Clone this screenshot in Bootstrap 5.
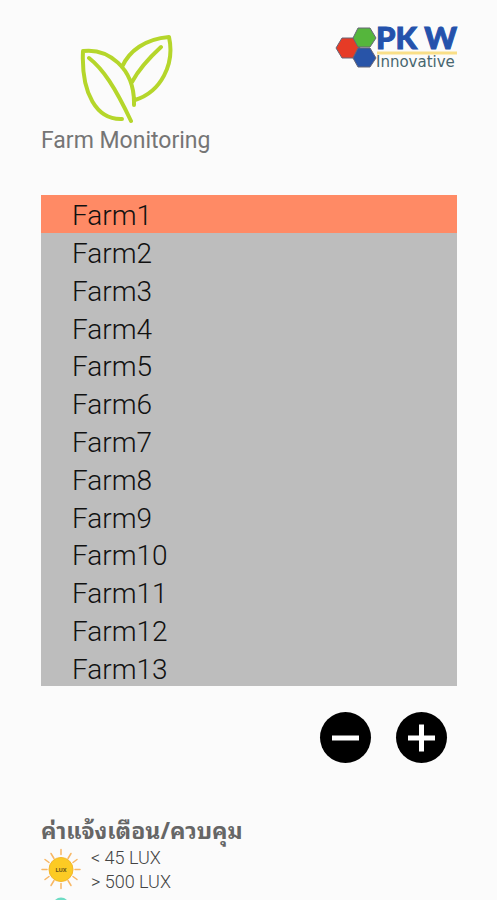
<!DOCTYPE html>
<html lang="th">
<head>
<meta charset="utf-8">
<meta name="viewport" content="width=device-width, initial-scale=1">
<title>Farm Monitoring</title>
<link href="https://cdn.jsdelivr.net/npm/bootstrap@5.3.0/dist/css/bootstrap.min.css" rel="stylesheet">
<style>
body{background:#fbfbfb;color:#666;font-family:Roboto,"Noto Sans",sans-serif}
.page-body{padding:24px 40px 0 41px}
.leaf-logo{width:96px;height:92px;margin:9px 0 0 37px}
.brand-title{font-size:23px;line-height:32px;font-weight:400;color:#757575}
.company-logo{width:124px;height:46px;margin-right:-3px;overflow:visible}
.logo-name{font:900 31px Lato,sans-serif;fill:#2452ac;stroke:#2452ac;stroke-width:1px}
.logo-tag{font:15px "DejaVu Sans",sans-serif;fill:#47666f}
.lux-mark{font:700 6px Roboto,sans-serif;fill:#6b5417}
.farm-list{height:491px;margin-top:38px;background:#bdbdbd}
.farm-item{padding:4px 31px 0;border:0;background:transparent;color:#111;font-size:28px;line-height:33px;font-weight:300;text-align:left}
.farm-item.selected{background:#ff8a65}
.actions{gap:25px;margin-top:26px;padding-right:10px}
.round-btn{width:51px;height:51px;padding:0;border:0;border-radius:50%;background:#000}
.limit-title{font-family:Waree,"Noto Sans Thai Looped",Loma,sans-serif;font-size:23px;line-height:28px;font-weight:700;color:#666;margin:52px 0 2px}
.limit-row{gap:10px}
.limit-icon{width:40px;height:49px}
.limit-text{padding-top:1px;font-size:18px;line-height:24px;font-weight:300;color:#444}
</style>
</head>
<body>
<main class="page-body vh-100 overflow-hidden">
<header class="d-flex justify-content-between align-items-start">
<div>
<svg class="leaf-logo d-block" viewBox="0 0 96 92" fill="none" stroke="#b5d62b" stroke-width="4" stroke-linecap="round" stroke-linejoin="round" aria-hidden="true">
<path d="M44 86C19 87 3 61 5 18C29 15 57 34 56 72M11 25C25 36 37 54 53 88M44 34C51 18 67 6 91 4C97 31 83 59 57 67M54 49C61 36 71 25 83 14"/>
</svg>
<h1 class="brand-title mb-0">Farm Monitoring</h1>
</div>
<svg class="company-logo" viewBox="0 0 124 46" role="img" aria-label="PK W Innovative">
<g stroke="#667" stroke-width="1"><path d="M6 14h12l6 10-6 10H6L0 24z" fill="#e63b26"/><path d="M22 4h12l6 10-6 9H22l-5-9z" fill="#55b63c"/><path d="M22 24h12l6 10-6 9H22l-5-9z" fill="#2854a8"/></g>
<text class="logo-name" x="40" y="25">PK W</text>
<path d="M41 29h80" stroke="#f9df88" stroke-width="3"/>
<text class="logo-tag" x="40" y="43">Innovative</text>
</svg>
</header>
<div class="farm-list d-flex flex-column" role="group" aria-label="Farms">
<button type="button" class="farm-item selected flex-fill" aria-pressed="true">Farm1</button>
<button type="button" class="farm-item flex-fill">Farm2</button>
<button type="button" class="farm-item flex-fill">Farm3</button>
<button type="button" class="farm-item flex-fill">Farm4</button>
<button type="button" class="farm-item flex-fill">Farm5</button>
<button type="button" class="farm-item flex-fill">Farm6</button>
<button type="button" class="farm-item flex-fill">Farm7</button>
<button type="button" class="farm-item flex-fill">Farm8</button>
<button type="button" class="farm-item flex-fill">Farm9</button>
<button type="button" class="farm-item flex-fill">Farm10</button>
<button type="button" class="farm-item flex-fill">Farm11</button>
<button type="button" class="farm-item flex-fill">Farm12</button>
<button type="button" class="farm-item flex-fill">Farm13</button>
</div>
<div class="actions d-flex justify-content-end">
<button type="button" class="round-btn" aria-label="Remove farm"><svg class="d-block" viewBox="0 0 51 51" stroke="#fff" stroke-width="5" aria-hidden="true"><path d="M12 26h27"/></svg></button>
<button type="button" class="round-btn" aria-label="Add farm"><svg class="d-block" viewBox="0 0 51 51" stroke="#fff" stroke-width="5" aria-hidden="true"><path d="M12 26h27M25.500 12.500v27"/></svg></button>
</div>
<section>
<h2 class="limit-title">ค่าแจ้งเตือน/ควบคุม</h2>
<div class="limit-row d-flex">
<svg class="limit-icon" viewBox="0 0 40 48" aria-hidden="true">
<g stroke="#f8b765" stroke-width="1.500" stroke-linecap="round"><path d="M20 4v5M20 38v5M1 24h5M34 24h5M10 8l3 5M30 8l-3 5M10 40l3-5M30 40l-3-5M4 14l4 3M36 14l-4 3M4 34l4-3M36 34l-4-3"/></g>
<circle cx="20" cy="24" r="12" fill="#fccb24" stroke="#f3b62e"/>
<text class="lux-mark" x="20" y="26" text-anchor="middle">LUX</text>
</svg>
<div class="limit-text"><div>&lt; 45 LUX</div><div>&gt; 500 LUX</div></div>
</div>
<div class="limit-row d-flex">
<svg class="limit-icon" viewBox="0 0 40 48" aria-hidden="true"><circle cx="20" cy="11" r="8" fill="#6edcc4"/></svg>
<div class="limit-text">&lt; 30 %RH</div>
</div>
</section>
</main>
<script src="https://cdn.jsdelivr.net/npm/bootstrap@5.3.0/dist/js/bootstrap.bundle.min.js"></script>
</body>
</html>
